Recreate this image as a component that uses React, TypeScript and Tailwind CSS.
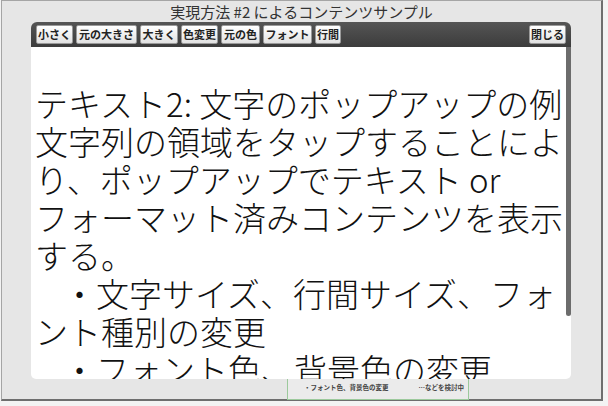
const jp = "font-['Noto_Sans_CJK_JP','Noto_Sans',sans-serif]";

const tools = [
  { label: "小さく", w: "w-[37px]" },
  { label: "元の大きさ", w: "w-[61px]" },
  { label: "大きく", w: "w-[38px]" },
  { label: "色変更", w: "w-[37px]" },
  { label: "元の色", w: "w-[39px]" },
  { label: "フォント", w: "w-[49px]" },
  { label: "行間", w: "w-[26px]" },
];

function ToolButton({ label, w }: { label: string; w: string }) {
  return (
    <button
      className={
        w +
        " h-[19px] flex items-center justify-center rounded-[2px] border border-[#9a9a9a] bg-gradient-to-b from-[#ffffff] to-[#e2e2e2] text-[11px] font-bold leading-none text-[#222] whitespace-nowrap"
      }
    >
      {label}
    </button>
  );
}

export default function App() {
  return (
    <div className={jp + " w-[608px] h-[406px] bg-[#f3f3f3] overflow-hidden"}>
      <div className="relative ml-[1px] w-[602px] h-[401px] bg-[#e6e6e6] border border-[#a5a5a5] border-r-2 border-b-2 border-r-[#6e6e6e] border-b-[#6e6e6e] flex flex-col">
        {/* title */}
        <div className="h-[21px] text-center text-[15px] leading-[21px] text-[#333]">
          実現方法 #2 によるコンテンツサンプル
        </div>

        <div className="relative z-10 ml-[29px] w-[540px] flex flex-col">
          {/* toolbar */}
          <div className="h-[25px] rounded-t-[6px] bg-gradient-to-b from-[#555] to-[#3c3c3c] flex items-center pl-[5px] pr-[5px]">
            <div className="flex gap-[3px]">
              {tools.map((t) => (
                <ToolButton key={t.label} label={t.label} w={t.w} />
              ))}
            </div>
            <div className="ml-auto">
              <ToolButton label="閉じる" w="w-[37px]" />
            </div>
          </div>

          {/* content */}
          <div className="relative h-[332px] bg-white rounded-b-[5px] overflow-hidden pl-[4px] pt-[37px] text-[33px] font-light leading-[38px] text-[#111] whitespace-nowrap">
            <div className="absolute right-0 top-0 w-[5px] h-[269px] rounded-b-[3px] bg-[#6c6c6c]" />
            <div>テキスト2: 文字のポップアップの例</div>
            <div>文字列の領域をタップすることによ</div>
            <div>り、ポップアップでテキスト or</div>
            <div>フォーマット済みコンテンツを表示</div>
            <div>する。</div>
            <div className="pl-[28px]">・文字サイズ、行間サイズ、フォ</div>
            <div>ント種別の変更</div>
            <div className="pl-[28px]">・フォント色、背景色の変更</div>
          </div>
        </div>

        {/* partially hidden note */}
        <div className="absolute left-[285px] top-[367px] w-[182px] h-[32px] border border-[#9cc99c] bg-[#ebebeb] flex items-end justify-between pl-[16px] pr-[4px] pb-[9px] text-[6.5px] leading-none font-bold text-[#444]">
          <span>・フォント色、背景色の変更</span>
          <span>…などを検討中</span>
        </div>
      </div>
    </div>
  );
}
